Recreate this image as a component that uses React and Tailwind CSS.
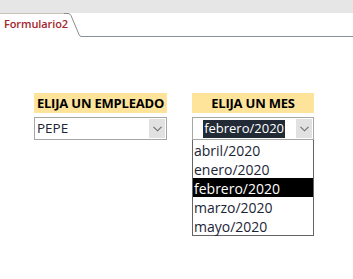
const months = ["abril/2020", "enero/2020", "febrero/2020", "marzo/2020", "mayo/2020"];

function Chevron() {
  return (
    <svg width="9" height="6" viewBox="0 0 9 6" fill="none">
      <path d="M0.5 0.8 L4.5 4.8 L8.5 0.8" stroke="#6b6b6b" strokeWidth="1.1" />
    </svg>
  );
}

function ArrowButton() {
  return (
    <div className="flex h-[19px] w-[16px] items-center justify-center bg-[#e1e1e1]">
      <Chevron />
    </div>
  );
}

export default function App() {
  return (
    <div
      className="h-[279px] w-[353px] overflow-hidden bg-white"
      style={{ fontFamily: "'Open Sans', 'Noto Sans', sans-serif" }}
    >
      <div className="h-[13px] bg-[#e6e6e6]" />
      <div className="flex h-[24px]">
        <div className="flex w-[64px] items-start border-t border-[#c9c1b8] pl-[4px] pt-[2px] text-[11px] font-semibold leading-[16px] tracking-[-0.1px] text-[#a4262c]">
          Formulario2
        </div>
        <svg width="17" height="24" viewBox="0 0 17 24" className="shrink-0">
          <path d="M0 0.5 L4 0.5 Q6 0.5 7 2.5 L15 21.5 Q16 23.5 17 23.5" stroke="#8c8c8c" fill="none" />
        </svg>
        <div className="flex-1 border-b border-[#8a9199]" />
      </div>

      <div className="mt-[56px] flex">
        <div className="ml-[34px] w-[133px]">
          <div className="flex h-[20px] items-center justify-center bg-[#fee49b] text-[13px] font-bold leading-none tracking-[-0.2px] text-black">
            ELIJA UN EMPLEADO
          </div>
          <div className="mt-[4px] flex h-[23px] items-center border border-[#a6a6a6] bg-white">
            <span className="flex-1 pl-[2px] text-[13.5px] leading-none text-[#1b2536]">PEPE</span>
            <div className="mr-[1px]">
              <ArrowButton />
            </div>
          </div>
        </div>

        <div className="ml-[25px] w-[122px]">
          <div className="flex h-[20px] items-center justify-center bg-[#fee49b] text-[13px] font-bold leading-none tracking-[-0.2px] text-black">
            ELIJA UN MES
          </div>
          <div className="mt-[4px] flex h-[23px] items-center border border-[#a6a6a6] bg-white">
            <div className="flex flex-1 justify-end">
              <span className="flex h-[18px] items-center bg-[#222a35] px-[1px] text-[13px] leading-none text-white">
                febrero/2020
              </span>
            </div>
            <div className="ml-[11px] mr-[1px]">
              <ArrowButton />
            </div>
          </div>
          <div className="border border-t-0 border-[#646464] bg-white">
            {months.map((m) => (
              <div
                key={m}
                className={
                  m === "febrero/2020"
                    ? "flex h-[19px] items-center bg-black pl-[1px] pt-[1px] text-[14px] text-white"
                    : "flex h-[19px] items-center pl-[1px] pt-[1px] text-[14px] text-[#1b2536]"
                }
              >
                {m}
              </div>
            ))}
          </div>
        </div>
      </div>
    </div>
  );
}
